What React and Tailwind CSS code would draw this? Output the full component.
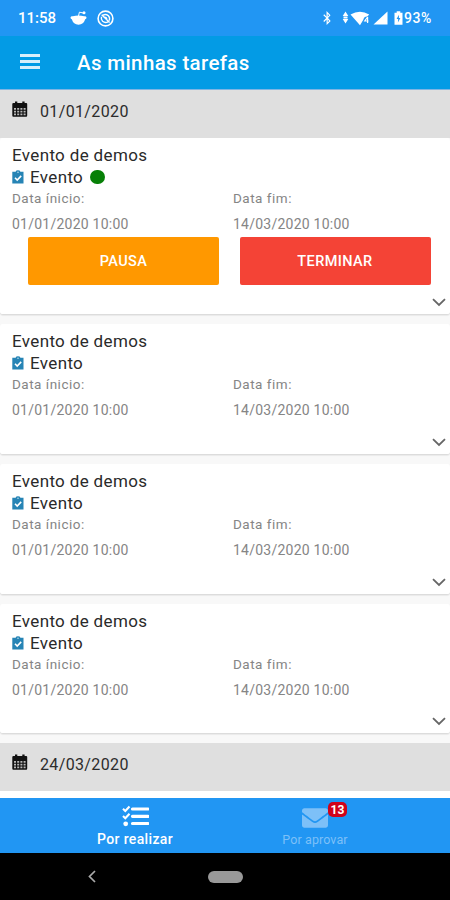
import React from "react";
import { FaEnvelope, FaBluetoothB } from "react-icons/fa";

function StatusBar() {
  return (
    <div className="flex h-9 items-center bg-[#2196f3] pl-[18px] pr-[17px] text-[15px] font-medium text-white">
      <span className="w-[39px] whitespace-nowrap pt-[1px] text-[15px]">11:58</span>
      <svg className="ml-[13px]" width="17" height="16" viewBox="0 0 17 16" fill="white">
        <path d="M0.5 7.2Q1.2 5.7 2.8 6.3Q8.5 4.8 14.2 6.3Q15.8 5.7 16.5 7.2Q16.5 9 15.2 9.3Q13.6 14.7 8.5 14.7Q3.4 14.7 1.8 9.3Q0.5 9 0.5 7.2Z" />
        <path d="M8.5 6L9.4 2.2L13 2.9" fill="none" stroke="white" strokeWidth="1" />
        <circle cx="14" cy="2.7" r="1.5" />
      </svg>
      <svg className="ml-[10px]" width="17" height="17" viewBox="0 0 17 17" fill="none" stroke="white">
        <circle cx="8.5" cy="8.5" r="7.4" strokeWidth="1.6" />
        <path d="M12.3 10.6Q13.3 7.6 11.2 5.6Q8.6 3.6 5.8 5.4M4.5 6.8Q3.7 9.4 5.6 11.3Q8.2 13.4 11 11.8M4.7 4.7L12.6 12.6M7.2 7.2Q9.6 6.8 9.8 9.4" strokeWidth="1.4" />
      </svg>
      <div className="ml-auto flex items-center">
        <FaBluetoothB className="h-[14px] w-[12px]" />
        <svg className="ml-[9px]" width="7" height="14" viewBox="0 0 7 14" fill="white">
          <path d="M3.5 0.5L6.3 5H0.7ZM3.5 12.5L0.7 8H6.3ZM1.5 5.5H5.5V7.5H1.5Z" />
        </svg>
        <svg className="ml-[1px]" width="20" height="15" viewBox="0 0 20 15" fill="white">
          <path d="M0.5 3.5Q10 -2.2 19.2 3.5L17.3 5.6Q14 5.5 13.2 9L10 14.2Z" />
          <path d="M17.6 6L14.8 10H18.5M17.6 6V12" fill="none" stroke="white" strokeWidth="1.2" />
        </svg>
        <svg className="ml-[3px]" width="15" height="14" viewBox="0 0 15 14" fill="white">
          <path d="M14.5 0.5V13.5H0.5Z" />
        </svg>
        <svg className="ml-[6px]" width="9" height="14" viewBox="0 0 9 14">
          <path d="M2.7 0.3H6.3V1.7H8.5V13.7H0.5V1.7H2.7Z" fill="white" />
          <path d="M4.9 3.7L2.6 8H4.2L3.9 11.4L6.4 7H4.9Z" fill="#2196f3" />
        </svg>
        <span className="ml-[1px] w-[29px] whitespace-nowrap text-[14px] tracking-[0.6px]">93%</span>
      </div>
    </div>
  );
}

function Header() {
  return (
    <header className="flex h-[54px] items-center border-b border-[#7fb5e4] bg-[#039be5] pl-5 text-white">
      <div className="mb-[2px] flex w-[20px] flex-col gap-[3px]">
        <span className="h-[3px] bg-[#d9effb]" />
        <span className="h-[3px] bg-[#d9effb]" />
        <span className="h-[3px] bg-[#d9effb]" />
      </div>
      <h1 className="ml-[37px] whitespace-nowrap text-[20.5px] font-medium leading-6 tracking-[0.36px]">As minhas tarefas</h1>
    </header>
  );
}

function CalendarIcon() {
  return (
    <svg className="mt-[11px]" width="16" height="16" viewBox="0 0 16 16">
      <path d="M1.5 2H3V0.5H5.3V2H10.3V0.5H12.6V2H14.2Q15.2 2 15.2 3V5H0.3V3Q0.3 2 1.5 2ZM0.3 5H15.2V14.5Q15.2 15.7 14.2 15.7H1.3Q0.3 15.7 0.3 14.5Z" fill="#111" />
      <path d="M2 7h2v1.7H2zM5.2 7h2v1.7h-2zM8.4 7h2v1.7h-2zM11.6 7h2v1.7h-2zM2 9.8h2v1.7H2zM5.2 9.8h2v1.7h-2zM8.4 9.8h2v1.7h-2zM11.6 9.8h2v1.7h-2zM2 12.6h2v1.6H2zM5.2 12.6h2v1.6h-2zM8.4 12.6h2v1.6h-2zM11.6 12.6h2v1.6h-2z" fill="#b8b8b8" />
    </svg>
  );
}

function DateBand({ date }) {
  return (
    <div className="flex h-12 shrink-0 items-start bg-[#dfdfdf] pl-[11.5px]">
      <CalendarIcon />
      <span className="ml-[12.5px] mt-3 whitespace-nowrap text-[16px] leading-5 tracking-[0.36px] text-[#2c2c2c]">{date}</span>
    </div>
  );
}

function ClipboardIcon() {
  return (
    <svg width="12" height="14" viewBox="0 0 12 14">
      <path d="M0.3 1.7H3.6Q4 0.3 6 0.3Q8 0.3 8.4 1.7H11.5V13.6H0.3Z" fill="#2684b5" />
      <circle cx="6" cy="2.2" r="0.8" fill="#b9dced" />
      <path d="M3 7.8L5.2 10L9.2 5.9" fill="none" stroke="white" strokeWidth="1.6" />
    </svg>
  );
}

function Chevron() {
  return (
    <svg width="14" height="9" viewBox="0 0 14 9" fill="none" stroke="#666" strokeWidth="1.8">
      <path d="M1 1.2L7 7L13 1.2" />
    </svg>
  );
}

function DateField({ label, value }) {
  return (
    <div className="flex w-[221px] shrink-0 flex-col whitespace-nowrap text-[14px] text-[#858585]">
      <span className="h-[22px] text-[13.5px] leading-[20px] tracking-[0.5px]">{label}</span>
      <span className="mt-[4px] leading-[20px] tracking-[0.24px]">{value}</span>
    </div>
  );
}

function TaskCard({ active }) {
  return (
    <article className={(active ? "h-[177.4px]" : "h-[130.6px]") + " flex shrink-0 flex-col rounded-[3px] border-b border-[#dcdcdc] bg-white pt-[6px] shadow-[0_1px_1px_rgba(0,0,0,0.06)]"}>
      <div className="px-3 text-[17px] leading-[22px] tracking-[0.35px] text-[#2a2a2a]">
        <p className="whitespace-nowrap">Evento de demos</p>
        <div className="flex items-center">
          <ClipboardIcon />
          <span className="ml-[6px]">Evento</span>
          {active && <span className="ml-[7px] h-[14px] w-[15px] rounded-full bg-[#078007]" />}
        </div>
      </div>
      <div className="flex pl-3">
        <DateField label="Data ínicio:" value="01/01/2020 10:00" />
        <DateField label="Data fim:" value="14/03/2020 10:00" />
      </div>
      {active && (
        <div className="mt-[3px] flex gap-[20.5px] pl-[28px] text-[14.5px] font-medium tracking-[0.4px] text-white">
          <button className="h-12 w-[191px] rounded-[2px] bg-[#ff9800] pt-[2px]">PAUSA</button>
          <button className="h-12 w-[191px] rounded-[2px] bg-[#f44336] pt-[2px]">TERMINAR</button>
        </div>
      )}
      <div className="mb-[7px] mr-[4px] mt-auto flex justify-end">
        <Chevron />
      </div>
    </article>
  );
}

function ChecklistIcon() {
  return (
    <svg width="27" height="22" viewBox="0 0 27 22" fill="none" stroke="white">
      <path d="M10.5 4H26M10.5 11.3H26M10.5 18.5H26" strokeWidth="3.2" strokeLinecap="round" />
      <path d="M1 3.8L3.3 6L7.5 1.5M1 11L3.3 13.2L7.5 8.7" strokeWidth="2.1" />
      <circle cx="3.7" cy="18.8" r="2.4" fill="white" stroke="none" />
    </svg>
  );
}

function TabBar() {
  return (
    <nav className="flex h-[55px] shrink-0 bg-[#2196f3] pl-[45px] text-white">
      <div className="flex w-[180px] flex-col items-center pt-[7px]">
        <ChecklistIcon />
        <span className="mt-[1.5px] whitespace-nowrap text-[14px] font-medium leading-5 tracking-[0.35px]">Por realizar</span>
      </div>
      <div className="flex w-[180px] flex-col items-center pt-[7px] text-[#7dc0f8]">
        <div className="relative">
          <FaEnvelope className="h-[26px] w-[26px]" />
          <span className="absolute -top-[3px] left-[26px] flex h-[15px] w-[19px] items-center justify-center rounded-[5px] bg-[#d0021b] text-[12px] font-bold leading-none text-white">13</span>
        </div>
        <span className="-mt-[1px] whitespace-nowrap text-[12.5px] leading-5 tracking-[0.1px]">Por aprovar</span>
      </div>
    </nav>
  );
}

function SystemNav() {
  return (
    <div className="flex h-[47px] shrink-0 items-center bg-black pl-[88px]">
      <svg width="8" height="13" viewBox="0 0 8 13" fill="none" stroke="#aaa" strokeWidth="1.7">
        <path d="M7 1L1.5 6.5L7 12" />
      </svg>
      <span className="ml-[112px] h-3 w-[35px] rounded-full bg-[#999]" />
    </div>
  );
}

export default function App() {
  return (
    <div className="flex h-[900px] w-[450px] flex-col overflow-hidden bg-[#f8f8f8] font-['Roboto',sans-serif]">
      <StatusBar />
      <Header />
      <main className="flex h-[708px] flex-col overflow-hidden">
        <DateBand date="01/01/2020" />
        <div className="flex flex-col gap-[9px] pb-[9px]">
          <TaskCard active />
          <TaskCard />
          <TaskCard />
          <TaskCard />
        </div>
        <DateBand date="24/03/2020" />
        <div className="grow bg-white" />
      </main>
      <TabBar />
      <SystemNav />
    </div>
  );
}
